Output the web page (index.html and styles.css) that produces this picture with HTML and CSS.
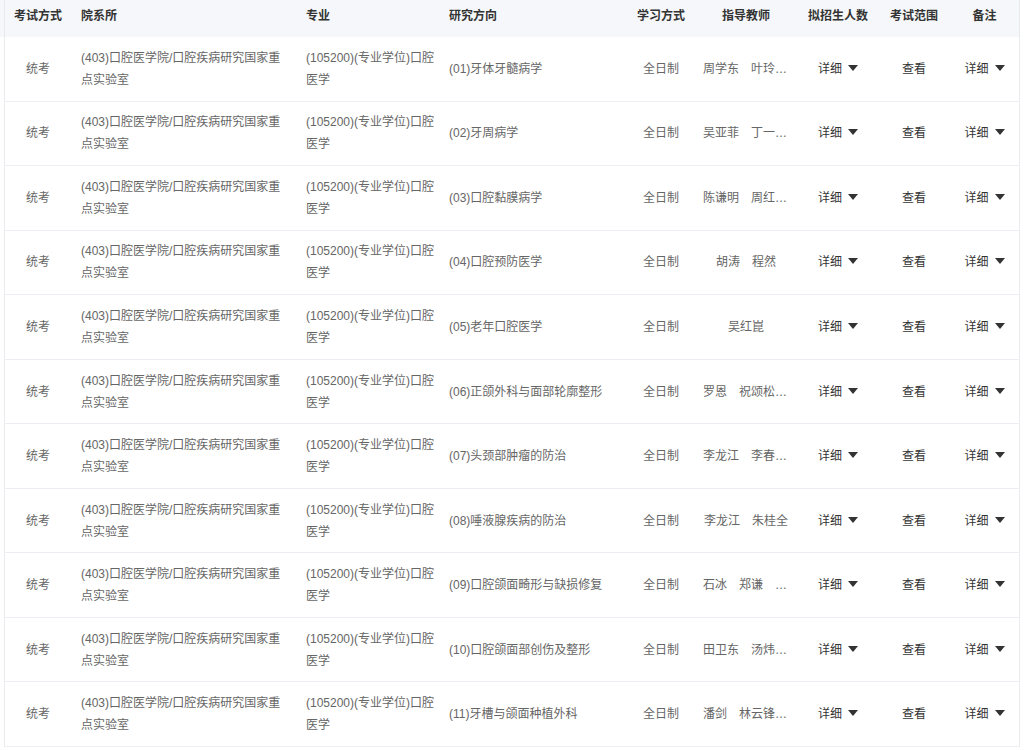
FILE: index.html
```html
<!DOCTYPE html>
<html lang="zh-CN">
<head>
<meta charset="utf-8">
<title>招生目录</title>
<link rel="stylesheet" href="styles.css">
</head>
<body>
<div class="sheet">
  <div class="thead">
    <div class="row head-row">
      <div class="cell c-center">考试方式</div>
      <div class="cell">院系所</div>
      <div class="cell c-major">专业</div>
      <div class="cell">研究方向</div>
      <div class="cell c-center">学习方式</div>
      <div class="cell c-center">指导教师</div>
      <div class="cell c-center">拟招生人数</div>
      <div class="cell c-center">考试范围</div>
      <div class="cell c-center">备注</div>
    </div>
  </div>
  <div class="tbody">
    <div class="row body-row">
      <div class="cell c-center">统考</div>
      <div class="cell wrap">(403)口腔医学院/口腔疾病研究国家重点实验室</div>
      <div class="cell wrap c-major">(105200)(专业学位)口腔医学</div>
      <div class="cell">(01)牙体牙髓病学</div>
      <div class="cell c-center">全日制</div>
      <div class="cell c-teacher"><div class="names">周学东　叶玲　黄定明</div></div>
      <div class="cell c-center link">详细<span class="caret"></span></div>
      <div class="cell c-center link">查看</div>
      <div class="cell c-center link">详细<span class="caret"></span></div>
    </div>
    <div class="row body-row">
      <div class="cell c-center">统考</div>
      <div class="cell wrap">(403)口腔医学院/口腔疾病研究国家重点实验室</div>
      <div class="cell wrap c-major">(105200)(专业学位)口腔医学</div>
      <div class="cell">(02)牙周病学</div>
      <div class="cell c-center">全日制</div>
      <div class="cell c-teacher"><div class="names">吴亚菲　丁一　赵蕾</div></div>
      <div class="cell c-center link">详细<span class="caret"></span></div>
      <div class="cell c-center link">查看</div>
      <div class="cell c-center link">详细<span class="caret"></span></div>
    </div>
    <div class="row body-row">
      <div class="cell c-center">统考</div>
      <div class="cell wrap">(403)口腔医学院/口腔疾病研究国家重点实验室</div>
      <div class="cell wrap c-major">(105200)(专业学位)口腔医学</div>
      <div class="cell">(03)口腔黏膜病学</div>
      <div class="cell c-center">全日制</div>
      <div class="cell c-teacher"><div class="names">陈谦明　周红梅　曾昕</div></div>
      <div class="cell c-center link">详细<span class="caret"></span></div>
      <div class="cell c-center link">查看</div>
      <div class="cell c-center link">详细<span class="caret"></span></div>
    </div>
    <div class="row body-row">
      <div class="cell c-center">统考</div>
      <div class="cell wrap">(403)口腔医学院/口腔疾病研究国家重点实验室</div>
      <div class="cell wrap c-major">(105200)(专业学位)口腔医学</div>
      <div class="cell">(04)口腔预防医学</div>
      <div class="cell c-center">全日制</div>
      <div class="cell c-teacher"><div class="names">胡涛　程然</div></div>
      <div class="cell c-center link">详细<span class="caret"></span></div>
      <div class="cell c-center link">查看</div>
      <div class="cell c-center link">详细<span class="caret"></span></div>
    </div>
    <div class="row body-row">
      <div class="cell c-center">统考</div>
      <div class="cell wrap">(403)口腔医学院/口腔疾病研究国家重点实验室</div>
      <div class="cell wrap c-major">(105200)(专业学位)口腔医学</div>
      <div class="cell">(05)老年口腔医学</div>
      <div class="cell c-center">全日制</div>
      <div class="cell c-teacher"><div class="names">吴红崑</div></div>
      <div class="cell c-center link">详细<span class="caret"></span></div>
      <div class="cell c-center link">查看</div>
      <div class="cell c-center link">详细<span class="caret"></span></div>
    </div>
    <div class="row body-row">
      <div class="cell c-center">统考</div>
      <div class="cell wrap">(403)口腔医学院/口腔疾病研究国家重点实验室</div>
      <div class="cell wrap c-major">(105200)(专业学位)口腔医学</div>
      <div class="cell">(06)正颌外科与面部轮廓整形</div>
      <div class="cell c-center">全日制</div>
      <div class="cell c-teacher"><div class="names">罗恩　祝颂松　王杭</div></div>
      <div class="cell c-center link">详细<span class="caret"></span></div>
      <div class="cell c-center link">查看</div>
      <div class="cell c-center link">详细<span class="caret"></span></div>
    </div>
    <div class="row body-row">
      <div class="cell c-center">统考</div>
      <div class="cell wrap">(403)口腔医学院/口腔疾病研究国家重点实验室</div>
      <div class="cell wrap c-major">(105200)(专业学位)口腔医学</div>
      <div class="cell">(07)头颈部肿瘤的防治</div>
      <div class="cell c-center">全日制</div>
      <div class="cell c-teacher"><div class="names">李龙江　李春洁　王晓毅</div></div>
      <div class="cell c-center link">详细<span class="caret"></span></div>
      <div class="cell c-center link">查看</div>
      <div class="cell c-center link">详细<span class="caret"></span></div>
    </div>
    <div class="row body-row">
      <div class="cell c-center">统考</div>
      <div class="cell wrap">(403)口腔医学院/口腔疾病研究国家重点实验室</div>
      <div class="cell wrap c-major">(105200)(专业学位)口腔医学</div>
      <div class="cell">(08)唾液腺疾病的防治</div>
      <div class="cell c-center">全日制</div>
      <div class="cell c-teacher"><div class="names">李龙江　朱桂全</div></div>
      <div class="cell c-center link">详细<span class="caret"></span></div>
      <div class="cell c-center link">查看</div>
      <div class="cell c-center link">详细<span class="caret"></span></div>
    </div>
    <div class="row body-row">
      <div class="cell c-center">统考</div>
      <div class="cell wrap">(403)口腔医学院/口腔疾病研究国家重点实验室</div>
      <div class="cell wrap c-major">(105200)(专业学位)口腔医学</div>
      <div class="cell">(09)口腔颌面畸形与缺损修复</div>
      <div class="cell c-center">全日制</div>
      <div class="cell c-teacher"><div class="names">石冰　郑谦　李承浩</div></div>
      <div class="cell c-center link">详细<span class="caret"></span></div>
      <div class="cell c-center link">查看</div>
      <div class="cell c-center link">详细<span class="caret"></span></div>
    </div>
    <div class="row body-row">
      <div class="cell c-center">统考</div>
      <div class="cell wrap">(403)口腔医学院/口腔疾病研究国家重点实验室</div>
      <div class="cell wrap c-major">(105200)(专业学位)口腔医学</div>
      <div class="cell">(10)口腔颌面部创伤及整形</div>
      <div class="cell c-center">全日制</div>
      <div class="cell c-teacher"><div class="names">田卫东　汤炜　刘磊</div></div>
      <div class="cell c-center link">详细<span class="caret"></span></div>
      <div class="cell c-center link">查看</div>
      <div class="cell c-center link">详细<span class="caret"></span></div>
    </div>
    <div class="row body-row">
      <div class="cell c-center">统考</div>
      <div class="cell wrap">(403)口腔医学院/口腔疾病研究国家重点实验室</div>
      <div class="cell wrap c-major">(105200)(专业学位)口腔医学</div>
      <div class="cell">(11)牙槽与颌面种植外科</div>
      <div class="cell c-center">全日制</div>
      <div class="cell c-teacher"><div class="names">潘剑　林云锋　满毅</div></div>
      <div class="cell c-center link">详细<span class="caret"></span></div>
      <div class="cell c-center link">查看</div>
      <div class="cell c-center link">详细<span class="caret"></span></div>
    </div>
  </div>
</div>
</body>
</html>
```

FILE: styles.css
```css
html, body {
  margin: 0;
  padding: 0;
  background: #ffffff;
}

body {
  font-family: "Liberation Sans", "Noto Sans CJK SC", sans-serif;
  font-size: 12px;
  color: #666666;
  overflow: hidden;
}

.sheet {
  width: 1020px;
}

.row {
  display: grid;
  grid-template-columns: 66px 225px 143px 189px 66px 104px 80px 72px 69px;
  box-sizing: border-box;
  border-left: 1px solid #e8eaee;
  border-right: 1px solid #e8eaee;
}

.thead {
  background: #f5f7fa;
  padding-left: 4px;
}

.head-row {
  height: 37px;
  padding-bottom: 6px;
  font-weight: bold;
  color: #333333;
  white-space: nowrap;
}

.tbody {
  margin-left: 4px;
}

.body-row {
  height: 64.55px;
  border-bottom: 1px solid #ebeef2;
}

.cell {
  display: flex;
  align-items: center;
  padding: 0 10px;
  min-width: 0;
  line-height: 22px;
}

.c-center {
  justify-content: center;
  text-align: center;
}

.head-row .c-center {
  padding: 0;
}

.c-major {
  padding-right: 3px;
}

.wrap {
  word-break: break-all;
}

.c-teacher {
  padding: 0 9px;
}

.names {
  width: 100%;
  overflow: hidden;
  white-space: nowrap;
  text-overflow: ellipsis;
  text-align: center;
}

.link {
  color: #333333;
  white-space: nowrap;
}

.caret {
  display: inline-block;
  width: 0;
  height: 0;
  margin-left: 6px;
  margin-top: -2px;
  border-left: 5.5px solid transparent;
  border-right: 5.5px solid transparent;
  border-top: 6.5px solid #333333;
}
```
